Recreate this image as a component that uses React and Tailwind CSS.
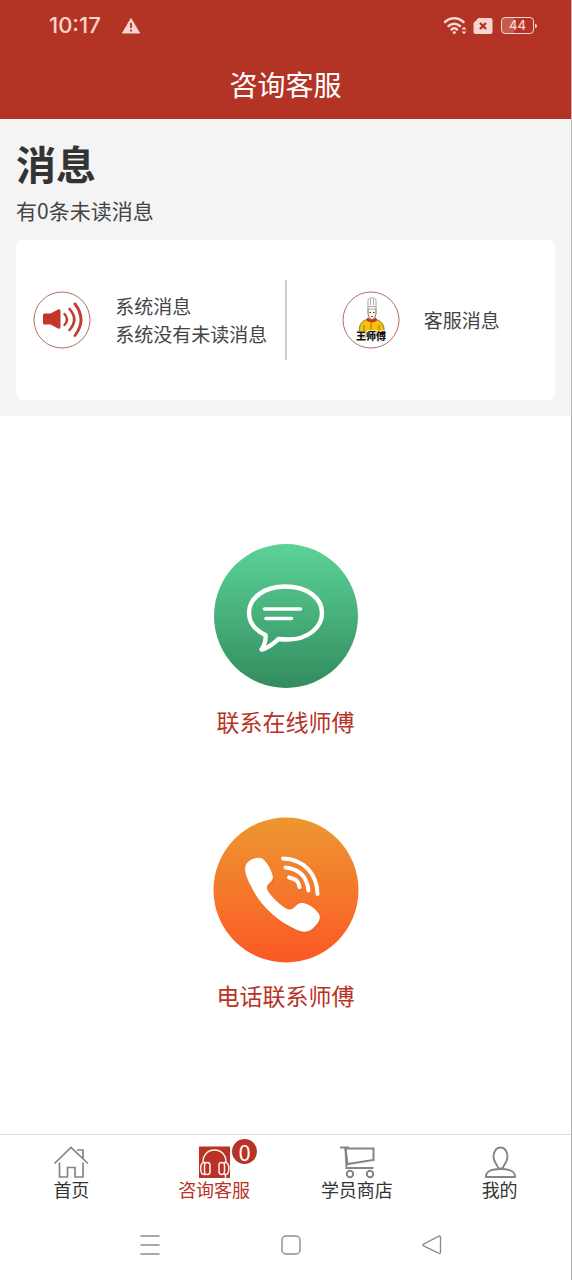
import React, { useState } from 'react';

const tabs = [
  { id: 'home', label: '首页', icon: HomeIcon },
  { id: 'service', label: '咨询客服', icon: HeadsetIcon, badge: 0 },
  { id: 'shop', label: '学员商店', icon: CartIcon },
  { id: 'mine', label: '我的', icon: UserIcon },
];

function HomeIcon() {
  return (
    <svg width="36" height="34" viewBox="0 0 36 34" fill="none" stroke="#858585" strokeWidth="1.7">
      <path d="M1.500 18.500 18 2.500 35 18.500" />
      <path d="M24 5h6v8" />
      <path d="M6.500 17.500v14.500h8v-9.500h7.500v9.500h8v-14.500" />
    </svg>
  );
}

function HeadsetIcon() {
  return (
    <svg width="36" height="34" viewBox="0 0 36 34" fill="none">
      <rect x="3" y="1.500" width="31" height="31.500" fill="#b93226" />
      <g stroke="#fff2ee" strokeWidth="1.5">
        <path d="M7 17C7 9.500 12 5 18.500 5S30 9.500 30 17" />
        <path d="M9.500 17.500H8C5.500 17.500 4.700 20 4.700 23.500S5.500 29.500 8 29.500H9.500" />
        <rect x="8.500" y="17.500" width="5.500" height="12" rx="2.700" />
        <rect x="23" y="17.500" width="5.500" height="12" rx="2.700" />
        <path d="M28 17.500h1.500c2.500 0 3.300 2.500 3.300 6s-.8 6-3.300 6h-1.500M29.500 29.500V33" />
      </g>
    </svg>
  );
}

function CartIcon() {
  return (
    <svg width="36" height="34" viewBox="0 0 36 34" fill="none" stroke="#858585" strokeWidth="2">
      <path d="M1 2.500h9" />
      <path d="M6.500 3.500h28V15L8.500 19Z" />
      <path d="M6.500 3.500 7.500 23H34.500" />
      <circle cx="11" cy="29" r="3.200" />
      <circle cx="31" cy="29" r="3.200" />
    </svg>
  );
}

function UserIcon() {
  return (
    <svg width="36" height="34" viewBox="0 0 36 34" fill="none" stroke="#858585" strokeWidth="1.900">
      <path d="M18.500 2.500C14 2.500 11.500 7 11.500 12C11.500 17 15.500 20 16.500 23.500H20.500C21.500 20 25.500 17 25.500 12C25.500 7 23 2.500 18.500 2.500Z" />
      <path d="M4 32C3.500 26 10 24 18.500 24S33.500 26 33 32Z" />
    </svg>
  );
}

function StatusIcons() {
  return (
    <div className="flex items-center gap-1.5">
      <svg width="24" height="20" viewBox="0 0 24 20" fill="none" stroke="#f8d5d0" strokeLinecap="round">
        <path d="M2 6C7.500 1 15 1 20.500 6" strokeWidth="2.600" />
        <path d="M5.500 10C9 7 13.500 7 17 10" strokeWidth="2.600" />
        <path d="M8.500 13.500C10.300 12 12.200 12 14 13.500" strokeWidth="2.400" />
        <circle cx="11.300" cy="16.500" r="1.500" fill="#f8d5d0" stroke="none" />
        <path d="M18.500 13.500 21 10.800 23.500 13.500ZM18.500 15.500 21 18.200 23.500 15.500Z" fill="#f8d5d0" stroke="none" />
      </svg>
      <svg width="20" height="18" viewBox="0 0 20 18">
        <path d="M5.500 1H17.500Q19.500 1 19.500 3V15Q19.500 17 17.500 17H2.500Q.5 17 .5 15V6Z" fill="#f8d5d0" />
        <path d="M7 6 13 12M13 6 7 12" stroke="#b33324" strokeWidth="2.400" />
      </svg>
      <div className="flex items-center gap-px pl-0.5">
        <span className="flex h-[17px] w-[33px] items-center justify-center rounded border border-[#f8d5d0] bg-linear-to-r from-[#c65a4d] from-40% to-transparent to-40% font-['Inter'] text-[13px] font-medium text-[#f8d5d0]">
          44
        </span>
        <span className="h-1 w-0.5 rounded-r bg-[#f8d5d0]" />
      </div>
    </div>
  );
}

function SpeakerIcon() {
  return (
    <svg className="shrink-0" width="58" height="58" viewBox="0 0 58 58" fill="none">
      <circle cx="29" cy="29" r="28" stroke="#b66b62" />
      <path d="M11.500 22.500H17.500L25 18.500Q27.500 17.500 27.500 20V36Q27.500 38.500 25 37.500L17.500 33.500H11.500Q10 33.500 10 32V24Q10 22.500 11.500 22.500Z" fill="#c43628" />
      <g stroke="#bd3f32" strokeLinecap="round">
        <path d="M31.500 23Q36.500 28.500 31.500 34" strokeWidth="2.400" />
        <path d="M36.500 18Q46 28.500 36.500 39" strokeWidth="2.600" />
        <path d="M42 13Q54 28.500 42 44.500" strokeWidth="2.900" />
      </g>
    </svg>
  );
}

function ChefIcon() {
  return (
    <svg className="shrink-0" width="58" height="58" viewBox="0 0 58 58" fill="none">
      <circle cx="29" cy="29" r="28" fill="#fff" stroke="#b66b62" />
      <path d="M17.500 46C16.500 34 18 31 25.500 28L33.500 28C41 31 43 34 42 46Z" fill="#f5c20c" stroke="#6a5210" strokeWidth=".7" />
      <path d="M22 34V42M37 34V42M29 32V42" stroke="#8b650c" strokeWidth=".8" />
      <path d="M26 17V23Q26.500 28 30 29Q33.500 28 34 23V17Z" fill="#fff0e3" stroke="#444" strokeWidth=".7" />
      <path d="M27.500 21.500H29M31 21.500H32.500" stroke="#222" strokeWidth=".9" />
      <path d="M29 25.500H31" stroke="#c2392b" strokeWidth=".9" />
      <path d="M25.500 26.500Q30 31 34 26.500L35 29.500Q30 33.500 24.500 29.500Z" fill="#c9321d" />
      <path d="M26 18V9Q27 6.500 30 7Q33 6.500 34 9V18Z" fill="#fff" stroke="#888" strokeWidth=".7" />
      <path d="M28.500 8V14M31.500 8V14M26 15.500H34" stroke="#888" strokeWidth=".7" />
      <text x="29" y="49" textAnchor="middle" fill="#111" stroke="#fff" strokeWidth="1" paintOrder="stroke" className="font-['Noto_Sans_CJK_SC'] text-[10px] font-black">
        王师傅
      </text>
    </svg>
  );
}

function ChatIcon() {
  return (
    <svg width="146" height="146" viewBox="0 0 146 146" fill="none">
      <defs>
        <linearGradient id="chatBg" x1="0" y1="0" x2="0" y2="1">
          <stop offset="0" stopColor="#5bd398" />
          <stop offset="1" stopColor="#338c5e" />
        </linearGradient>
      </defs>
      <circle cx="73" cy="73" r="72" fill="url(#chatBg)" />
      <g stroke="#fff" strokeLinecap="round" strokeLinejoin="round">
        <path d="M52.500 92C42 87 36 79 36 70C36 55 51 43.500 72.500 43.500S109 55 109 70S94 96.500 75 96.500Q71 96.500 65.500 96C61 100 56 105 48.500 106.500C51.500 102 53 97 52.500 92Z" strokeWidth="4.400" />
        <path d="M51.500 66H87.500M53 75.500H78.500" strokeWidth="3.600" />
      </g>
    </svg>
  );
}

function PhoneIcon() {
  return (
    <svg width="146" height="146" viewBox="0 0 146 146" fill="none">
      <defs>
        <linearGradient id="phoneBg" x1="0" y1="0" x2="0" y2="1">
          <stop offset="0" stopColor="#ed9730" />
          <stop offset=".4" stopColor="#f27f2d" />
          <stop offset="1" stopColor="#fc5824" />
        </linearGradient>
      </defs>
      <circle cx="73" cy="73" r="72.500" fill="url(#phoneBg)" />
      <path d="M34 46C38 41 48 39 51 43C55 47 59 54 60 60C60 66 53 66 54 72C57 79 67 88 74 92C82 95 82 85 90 86C96 87 103 92 106 97C109 102 103 109 99 112C94 116 88 115 82 112C65 104 47 89 38 69C33 60 30 51 34 46Z" fill="#d45c22" opacity=".35" transform="translate(1 2)" />
      <path d="M34 46C38 41 48 39 51 43C55 47 59 54 60 60C60 66 53 66 54 72C57 79 67 88 74 92C82 95 82 85 90 86C96 87 103 92 106 97C109 102 103 109 99 112C94 116 88 115 82 112C65 104 47 89 38 69C33 60 30 51 34 46Z" fill="#fff" />
      <g stroke="#fff" strokeWidth="4" strokeLinecap="round">
        <path d="M70 41.500C91 42 104 57 104.500 77" />
        <path d="M72.500 50.500C87 52 94 60 95.500 73.500" />
        <path d="M76 60.500C83 62 85.500 64 86.500 70" />
      </g>
    </svg>
  );
}

function App() {
  const [active, setActive] = useState('service');

  return (
    <div className="flex min-h-screen flex-col border-r border-[#b5b5b5] bg-white font-['Noto_Sans_CJK_SC',sans-serif] text-[#444]">
      <header className="bg-[#b33324]">
        <div className="flex h-[51px] items-center justify-between pr-[34px] pl-[49px]">
          <div className="flex items-center gap-5 text-[#f8d5d0]">
            <span className="font-['Inter'] text-[22px] font-medium">10:17</span>
            <svg width="20" height="18" viewBox="0 0 20 18">
              <path d="M10 1.500 18.500 16H1.500Z" fill="#f8d5d0" stroke="#f8d5d0" strokeLinejoin="round" />
              <path d="M10 6V11M10 12.500V14.500" stroke="#b33324" strokeWidth="1.800" />
            </svg>
          </div>
          <StatusIcons />
        </div>
        <h1 className="flex h-[68px] items-center justify-center pb-0.5 text-[28px] text-white">咨询客服</h1>
      </header>

      <section className="bg-[#f4f4f4] p-4">
        <h2 className="text-[40px] leading-[56px] font-bold text-[#333]">消息</h2>
        <p className="mb-2.5 text-[21px] leading-[39px]">有0条未读消息</p>
        <div className="flex h-40 items-center rounded-lg bg-white text-[19px] leading-7">
          <button type="button" className="flex h-20 flex-1 items-center justify-center gap-6 border-r-2 border-[#ccc] text-left">
            <SpeakerIcon />
            <span className="flex flex-col">
              <span>系统消息</span>
              <span>系统没有未读消息</span>
            </span>
          </button>
          <button type="button" className="flex h-20 flex-1 items-center justify-center gap-6">
            <ChefIcon />
            <span>客服消息</span>
          </button>
        </div>
      </section>

      <main className="flex flex-1 flex-col items-center justify-center gap-20 pt-1 text-[23px] leading-8 text-[#b93226]">
        <button type="button" className="flex flex-col items-center gap-4">
          <ChatIcon />
          <span>联系在线师傅</span>
        </button>
        <button type="button" className="flex flex-col items-center gap-4">
          <PhoneIcon />
          <span>电话联系师傅</span>
        </button>
      </main>

      <nav className="grid grid-cols-4 border-t border-[#ddd] pt-2.5 text-lg leading-5 text-[#333]">
        {tabs.map((tab) => (
          <button
            key={tab.id}
            type="button"
            onClick={() => setActive(tab.id)}
            className={active === tab.id ? 'flex flex-col items-center text-[#b93226]' : 'flex flex-col items-center'}
          >
            <span className="relative">
              <tab.icon />
              {tab.badge !== undefined && (
                <span className="absolute -top-1.5 left-9 flex size-[25px] items-center justify-center rounded-full bg-[#b93226] pb-0.5 text-[22px] text-white">
                  {tab.badge}
                </span>
              )}
            </span>
            <span>{tab.label}</span>
          </button>
        ))}
      </nav>

      {/* system navigation */}
      <div className="flex h-[81px] items-center justify-center gap-[119px] pt-2.5 pl-2.5">
        <button type="button" aria-label="菜单">
          <svg width="22" height="22" viewBox="0 0 22 22" stroke="#8d8d8d" strokeWidth="1.500">
            <path d="M1.500 2H20.500M1.500 11H20.500M1.500 20H20.500" />
          </svg>
        </button>
        <button type="button" aria-label="主页">
          <svg width="22" height="22" viewBox="0 0 22 22" fill="none" stroke="#8d8d8d" strokeWidth="1.400">
            <rect x="2" y="2" width="18" height="18" rx="4" />
          </svg>
        </button>
        <button type="button" aria-label="返回">
          <svg width="22" height="22" viewBox="0 0 22 22" fill="none" stroke="#8d8d8d" strokeWidth="1.400" strokeLinejoin="round">
            <path d="M2.500 10.200 17.500 2.300Q19.500 1.500 19.500 3.500V18Q19.500 20 17.500 19.200L2.500 11.800Q1 11 2.500 10.200Z" />
          </svg>
        </button>
      </div>
    </div>
  );
}

export default App;
